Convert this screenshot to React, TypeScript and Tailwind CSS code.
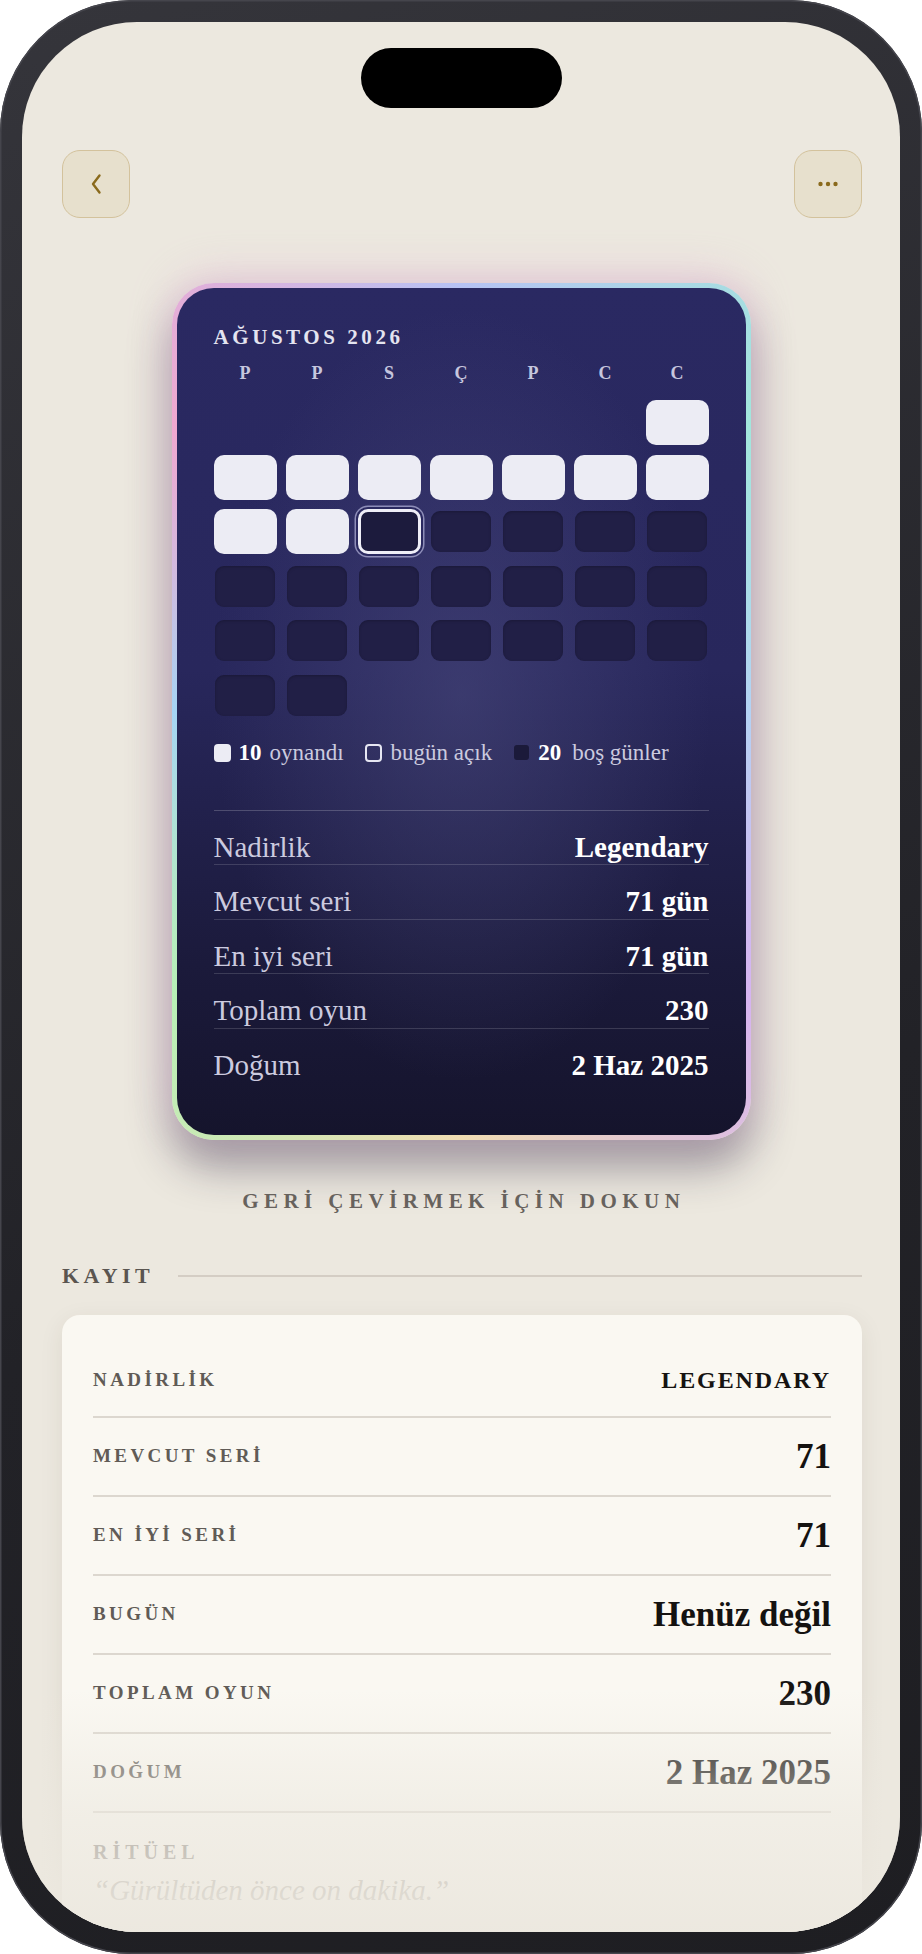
import React from 'react';

const SERIF = "font-['Liberation_Serif','Times_New_Roman',serif]";

type Day = 'pad' | 'played' | 'today' | 'empty';

const WEEKDAYS = ['P', 'P', 'S', 'Ç', 'P', 'C', 'C'];

const DAYS: Day[] = [
  ...Array<Day>(6).fill('pad'),
  ...Array<Day>(10).fill('played'),
  'today',
  ...Array<Day>(20).fill('empty'),
];

const STATS = [
  ['Nadirlik', 'Legendary'],
  ['Mevcut seri', '71 gün'],
  ['En iyi seri', '71 gün'],
  ['Toplam oyun', '230'],
  ['Doğum', '2 Haz 2025'],
];

const RECORD = [
  ['MEVCUT SERİ', '71'],
  ['EN İYİ SERİ', '71'],
  ['BUGÜN', 'Henüz değil'],
  ['TOPLAM OYUN', '230'],
  ['DOĞUM', '2 Haz 2025'],
];

function DayCell({ kind }: { kind: Day }) {
  if (kind === 'pad') return <div className="h-[45px]" />;
  if (kind === 'played') return <div className="h-[45px] rounded-[10px] bg-[#ececf4]" />;
  if (kind === 'today')
    return (
      <div className="h-[45px] rounded-[10px] border-[3px] border-[#eeeef7] bg-[#1c1b3d] shadow-[0_0_0_2px_#2a2960,0_0_0_3.5px_rgba(205,205,240,0.6)]" />
    );
  return (
    <div className="mx-[1.5px] my-[2px] h-[41px] rounded-[9px] bg-[#211f46] shadow-[inset_0_1px_3px_rgba(0,0,0,0.22)]" />
  );
}

function CalendarCard() {
  return (
    <div className="mx-auto mt-[65px] w-[579px] rounded-[42px] bg-[conic-gradient(from_0deg,#b6c2f4,#a2e6dc_45deg,#b4d2f4_90deg,#d6b4f0_135deg,#f0dcb2_180deg,#b8f0b6_225deg,#a6d4f4_270deg,#f0a8d0_315deg,#b6c2f4)] p-[5px] shadow-[0_-8px_40px_rgba(226,172,214,0.45),0_26px_44px_rgba(40,30,60,0.42)]">
      <div className="rounded-[37px] bg-[image:radial-gradient(ellipse_at_50%_48%,rgba(78,78,130,0.5),transparent_62%),linear-gradient(180deg,#2a2962_0%,#28275c_45%,#1b1a3b_80%,#15142c_100%)] px-[37px] pb-[53px] pt-[37px]">
        <div className="text-[21px] font-bold leading-[24px] tracking-[0.17em] text-[#e4e4f0]">AĞUSTOS 2026</div>

        <div className="mt-[14px] grid grid-cols-7 gap-x-[9px] text-center text-[18px] font-bold leading-[20px] text-[#c6c6de]">
          {WEEKDAYS.map((d, i) => (
            <span key={i}>{d}</span>
          ))}
        </div>

        <div className="mt-[17px] grid grid-cols-7 gap-x-[9px] gap-y-[9.5px]">
          {DAYS.map((k, i) => (
            <DayCell key={i} kind={k} />
          ))}
        </div>

        <div className="mt-[21px] flex items-center text-[23px] leading-[28px] text-[#cbcadf]">
          <span className="h-[18px] w-[17px] rounded-[4px] bg-[#ececf4]" />
          <span className="ml-[8px] font-bold text-white">10</span>
          <span className="ml-[8px]">oynandı</span>
          <span className="ml-[21px] h-[18px] w-[17px] rounded-[4px] border-2 border-[#e6e6f2]" />
          <span className="ml-[9px]">bugün açık</span>
          <span className="ml-[22px] h-[15px] w-[15px] rounded-[3px] bg-[#1b1a3a]" />
          <span className="ml-[9px] font-bold text-white">20</span>
          <span className="ml-[11px]">boş günler</span>
        </div>

        <div className="mt-[43px] border-t border-white/20">
          {STATS.map(([label, value]) => (
            <div
              key={label}
              className="flex items-end justify-between border-b border-white/15 pb-[1.5px] pt-[20px] text-[29px] leading-[32px] last:border-b-0"
            >
              <span className="text-[#cbcadf]">{label}</span>
              <span className="font-bold text-white">{value}</span>
            </div>
          ))}
        </div>
      </div>
    </div>
  );
}

function RecordCard() {
  return (
    <div className="mt-[26px] rounded-[18px] bg-[#faf8f2] px-[31px] pt-[29px] pb-[40px] shadow-[0_6px_24px_rgba(60,45,30,0.08)]">
      <div className="flex h-[74px] items-center justify-between border-b-2 border-[#dcd7cf]">
        <span className="text-[19px] font-bold tracking-[0.18em] text-[#605b56]">NADİRLİK</span>
        <span className="text-[24px] font-bold tracking-[0.08em] text-[#161311]">LEGENDARY</span>
      </div>
      {RECORD.map(([label, value]) => (
        <div key={label} className="flex h-[79px] items-center justify-between border-b-2 border-[#dcd7cf]">
          <span className="text-[19px] font-bold tracking-[0.18em] text-[#605b56]">{label}</span>
          <span className="text-[35px] font-bold leading-[40px] text-[#141210]">{value}</span>
        </div>
      ))}
      <div className="pt-[27px] text-[20px] font-bold leading-[24px] tracking-[0.25em] text-[#6a655f]">RİTÜEL</div>
      <div className="mt-[9px] text-[29px] italic leading-[34px] text-[#8a847c]">“Gürültüden önce on dakika.”</div>
    </div>
  );
}

export default function App() {
  return (
    <div className={`h-[1954px] w-[922px] bg-white ${SERIF}`}>
      <div className="h-full rounded-[132px] bg-[linear-gradient(160deg,#35353b,#222227_60%,#1e1e22)] p-[22px] shadow-[inset_0_0_0_1.5px_#45454c]">
        <div className="relative h-full overflow-hidden rounded-[115px] bg-[#ece8df]">
          <div className="mx-auto mt-[26px] h-[60px] w-[201px] rounded-full bg-black" />

          <div className="mt-[42px] flex items-center justify-between pl-[40px] pr-[38px]">
            <button className="flex h-[68px] w-[68px] items-center justify-center rounded-[18px] border-[1.5px] border-[#d3c29c] bg-[#e7e0cd]">
              <svg width="14" height="24" viewBox="0 0 14 24" fill="none">
                <path d="M10.5 3.5 L4 12 L10.5 20.5" stroke="#8a6a1c" strokeWidth="2.4" strokeLinecap="round" strokeLinejoin="round" />
              </svg>
            </button>
            <button className="flex h-[68px] w-[68px] items-center justify-center rounded-[18px] border-[1.5px] border-[#d3c29c] bg-[#e7e0cd]">
              <svg width="24" height="8" viewBox="0 0 24 8" fill="#8a6a1c">
                <circle cx="4.5" cy="4" r="2.2" />
                <circle cx="12" cy="4" r="2.2" />
                <circle cx="19.5" cy="4" r="2.2" />
              </svg>
            </button>
          </div>

          <CalendarCard />

          <div className="mt-[48px] pl-[0.26em] text-center text-[21px] font-bold leading-[26px] tracking-[0.26em] text-[#67625d]">
            GERİ ÇEVİRMEK İÇİN DOKUN
          </div>

          <div className="pl-[40px] pr-[38px]">
            <div className="mt-[49px] flex items-center gap-[24px]">
              <span className="text-[22px] font-bold leading-[26px] tracking-[0.2em] text-[#5a5550]">KAYIT</span>
              <span className="h-[2px] flex-1 bg-[#d4cdc4]" />
            </div>
            <RecordCard />
          </div>

          <div className="pointer-events-none absolute inset-x-0 bottom-0 h-[242px] bg-[linear-gradient(180deg,rgba(236,232,223,0)_0%,rgba(236,232,223,0.6)_50%,rgba(236,232,223,0.97)_100%)]" />
        </div>
      </div>
    </div>
  );
}
